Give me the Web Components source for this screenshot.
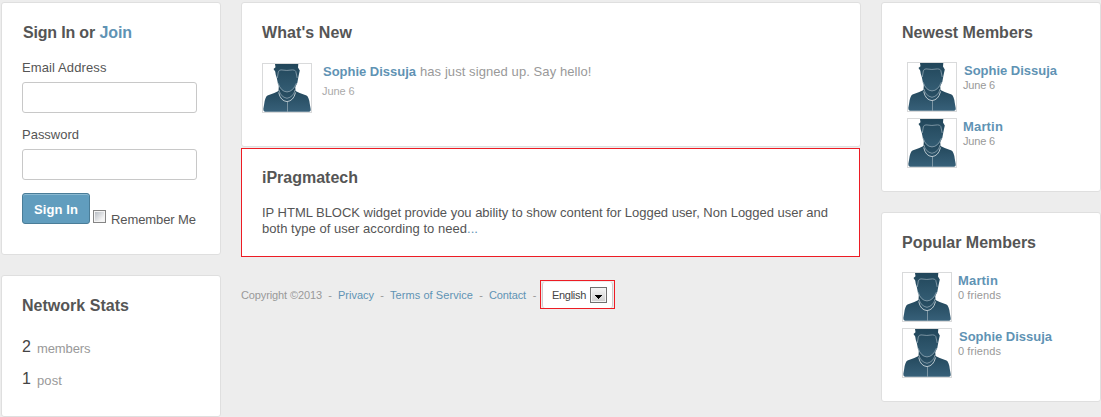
<!DOCTYPE html>
<html lang="en">
<head>
<meta charset="utf-8">
<title>Community home</title>
<style>
html,body{margin:0;height:417px;overflow:hidden;background:#ededed}
body{font-family:"Liberation Sans",Arial,sans-serif;font-size:13px;color:#555}
</style>
</head>
<body>
<community-page></community-page>
<script>
const define = (name, html, setup) => {
  const tpl = document.createElement('template');
  tpl.innerHTML = html;
  customElements.define(name, class extends HTMLElement {
    constructor() {
      super();
      this.attachShadow({mode: 'open'}).append(tpl.content.cloneNode(true));
    }
    connectedCallback() { if (setup) setup(this, this.shadowRoot); }
  });
};

/* A run of text tracked to a set width. */
define('fit-text', `<style>
:host{display:inline-block;white-space:pre;vertical-align:baseline}
:host([link]){color:#5f93b4}
:host([bold]){font-weight:bold}
</style><slot></slot>`, (el) => {
  const want = +el.getAttribute('w');
  requestAnimationFrame(() => {
    el.style.letterSpacing = '0px';
    const n = el.textContent.length;
    const gap = (want - el.getBoundingClientRect().width) / n;
    el.style.letterSpacing = gap.toFixed(3) + 'px';
  });
});

define('panel-card', `<style>
:host{display:block;box-sizing:border-box;background:#fff;border:1px solid #dfdfdf;border-radius:3px;padding:20px;min-width:0}
:host([marked]){border-color:#ed1c24;border-radius:0;padding-top:19px}
header{font-size:16px;line-height:20px;font-weight:bold;height:20px}
</style><header><slot name="title"></slot></header><slot></slot>`);

define('user-avatar', `<style>
:host{display:block;flex:none;box-sizing:border-box;width:50px;height:50px;border:1px solid #d9dadb;background:#fff}
svg{display:block}
</style>
<svg width="48" height="48" viewBox="0 0 48 48">
<defs>
<linearGradient id="h" x1="0" y1="0" x2="0" y2="1"><stop offset="0" stop-color="#21465a"/><stop offset="1" stop-color="#345d74"/></linearGradient>
<linearGradient id="b" x1="0" y1="0" x2="0" y2="1"><stop offset="0" stop-color="#1f4356"/><stop offset="1" stop-color="#376079"/></linearGradient>
</defs>
<path fill="url(#b)" d="M15.800 22 L15.500 27 Q11 29.500 4.500 31.500 Q2 33 1.200 40 L.3 45 Q.2 47.700 2 47.700 H46 Q48 47.700 47.700 45 L46.800 40 Q46 33 43.500 31.500 Q37 29.500 32.500 27 L32.200 22Z"/>
<path fill="url(#h)" d="M12 0 H35.300 L35 3.500 L36.800 6.500 L36 10 L35.200 14 L34.300 19 L32.800 22 Q30 28 24 28.300 Q18.500 28 16 22.500 L14.800 19 L13.800 14 L12.800 11 L12.200 7.500 L10.500 5 L12.500 3.200Z"/>
<g fill="none" stroke="#8fa5b1" stroke-width=".8">
<path d="M14.300 14 L15.300 8 Q16 5.800 18 5.900 Q24 7 29.500 5.900 Q32 5.700 32.800 7.500 L34.200 14"/>
<path d="M15 19 Q18 27.700 24 27.900 Q30 27.700 33.500 19"/>
<path d="M16 26 Q17.500 33 24 34.300 Q30.500 33 32 26"/>
<path stroke="#b9c7ce" stroke-width="1" d="M15.700 28.500 Q17.500 37 24 37.600 Q30.500 37 32.500 28.500"/>
<path d="M24.500 38 V48"/>
</g></svg>`);

define('member-row', `<style>
:host{display:flex;height:50px;margin-bottom:6px}
.info{padding-left:6px;min-width:0}
.name{display:block;height:15px;padding-top:1px;line-height:16px;padding-left:var(--indent,0)}
.meta{display:block;font-size:11px;line-height:14px;color:#999}
</style><user-avatar></user-avatar><div class="info"><span class="name"><slot name="name"></slot></span><span class="meta"><slot></slot></span></div>`);

define('text-field', `<style>
:host{display:block}
label{display:block;box-sizing:border-box;padding-top:1px;font-size:13px;line-height:16px;height:23px}
input{display:block;box-sizing:border-box;width:175px;height:31px;margin:0;border:1px solid #c8c8c8;border-radius:3px;background:#fff;outline:0}
</style><label><slot></slot></label><input aria-label="field">`);

define('sign-in-form', `<style>
:host{display:block;padding-top:16px}
text-field+text-field{margin-top:13px}
.row{display:flex;margin-top:13px;height:31px}
button{box-sizing:border-box;width:68px;height:31px;margin:0;padding:2px 0 0;border:1px solid #4a7d98;border-radius:3px;background:#619dbe;box-shadow:inset 0 1px #8bbad2;color:#fff;font:bold 13px/16px "Liberation Sans",Arial,sans-serif}
.check{box-sizing:border-box;width:13px;height:13px;margin:17px 0 0 3px;border:1px solid #858585;background:linear-gradient(135deg,#b9bec5,#f4f4f4 80%) content-box,#f4f4f4;padding:1px}
.remember{margin:19px 0 0 5px;line-height:16px}
</style>
<text-field><fit-text w="84.500">Email Address</fit-text></text-field>
<text-field><fit-text w="57">Password</fit-text></text-field>
<div class="row"><button><fit-text w="44">Sign In</fit-text></button><span class="check" role="checkbox"></span><span class="remember"><fit-text w="85">Remember Me</fit-text></span></div>`);

define('stat-line', `<style>
:host{display:flex;align-items:baseline;height:32px;line-height:20px}
b{font-weight:normal;font-size:16px;width:15px;color:#444}
span{color:#999;font-size:13px;padding-top:1px;transform:translateY(1px)}
</style><b><slot name="count"></slot></b><span><slot></slot></span>`);

define('activity-item', `<style>
:host{display:flex;padding-top:20px}
.body{padding-left:10px}
.line{padding:1px 0 0 1px;line-height:16px;height:20px;color:#999;white-space:nowrap}
.date{font-size:11px;line-height:14px;color:#aaa}
</style><user-avatar></user-avatar><div class="body"><div class="line"><slot></slot></div><div class="date"><slot name="date"></slot></div></div>`);

define('language-picker', `<style>
:host{display:block;box-sizing:border-box;width:75px;height:29px;border:1px solid #ed1c24;padding:1px}
.box{box-sizing:border-box;height:26px;border:1px solid #ccc;border-width:0 1px;border-radius:3px;background:#fff;display:flex;align-items:center;padding:0 5px 0 9px;justify-content:space-between;color:#444}
.arrow{box-sizing:border-box;width:17px;height:16px;border:1px solid #707070;background:linear-gradient(#f5f5f5,#cfcfcf);box-shadow:inset 0 0 0 1px #f3f3f3}
svg{display:block}
</style><div class="box"><fit-text w="34">English</fit-text><span class="arrow"><svg width="15" height="14"><path d="M4 7h7v1h-1v1H9v1H8v1H7v-1H6V9H5V8H4z" fill="#000"/></svg></span></div>`);

define('page-footer', `<style>
:host{display:flex;align-items:center;height:29px;margin-top:23px;font-size:11px;color:#999;white-space:pre}
.dash{width:16px;text-align:center}
.last{width:14px}
</style>
<fit-text w="81">Copyright ©2013</fit-text><span class="dash">-</span><fit-text link w="36">Privacy</fit-text><span class="dash">-</span><fit-text link w="83">Terms of Service</fit-text><span class="dash">-</span><fit-text link w="37">Contact</fit-text><span class="dash last"> -</span><language-picker></language-picker>`);

define('community-page', `<style>
:host{display:grid;grid-template-columns:220px 620px 220px;column-gap:20px;padding:2px 0 0 1px;width:1100px;box-sizing:border-box;align-items:start}
.col{display:grid;row-gap:20px;align-content:start}
.main{display:block}
.news{height:145px;margin-bottom:1px}
.html{height:109px;width:619px}
p{margin:17px 0 0;line-height:16px;white-space:nowrap}
.stats{padding-top:21px}
</style>
<div class="col">
<panel-card style="height:253px"><span slot="title" style="padding-left:1px"><fit-text w="72">Sign In or</fit-text><fit-text link w="37"> Join</fit-text></span><sign-in-form></sign-in-form></panel-card>
<panel-card style="height:142px"><fit-text slot="title" w="107">Network Stats</fit-text><div class="stats"><stat-line><span slot="count">2</span><fit-text w="53.500">members</fit-text></stat-line><stat-line><span slot="count">1</span><fit-text w="25">post</fit-text></stat-line></div></panel-card>
</div>
<div class="main">
<panel-card class="news"><fit-text slot="title" w="90">What's New</fit-text><activity-item><fit-text link bold w="93">Sophie Dissuja</fit-text><span style="display:inline-block;width:4px"></span><fit-text w="171.500">has just signed up. Say hello!</fit-text><fit-text slot="date" w="32.500">June 6</fit-text></activity-item></panel-card>
<panel-card class="html" marked><fit-text slot="title" w="96">iPragmatech</fit-text><p><fit-text w="566">IP HTML BLOCK widget provide you ability to show content for Logged user, Non Logged user and</fit-text><br><fit-text w="216">both type of user according to need<span style="color:#5f93b4">...</span></fit-text></p></panel-card>
<page-footer></page-footer>
</div>
<div class="col">
<panel-card style="height:190px"><fit-text slot="title" w="131">Newest Members</fit-text><div style="padding:19px 0 0 5px">
<member-row style="--indent:1px"><fit-text slot="name" link bold w="93">Sophie Dissuja</fit-text><fit-text w="32">June 6</fit-text></member-row>
<member-row><fit-text slot="name" link bold w="40">Martin</fit-text><fit-text w="32">June 6</fit-text></member-row></div></panel-card>
<panel-card style="height:190px"><fit-text slot="title" w="134">Popular Members</fit-text><div style="padding-top:19px">
<member-row><fit-text slot="name" link bold w="40">Martin</fit-text><fit-text w="43">0 friends</fit-text></member-row>
<member-row style="--indent:1px"><fit-text slot="name" link bold w="93">Sophie Dissuja</fit-text><fit-text w="43">0 friends</fit-text></member-row></div></panel-card>
</div>`);
</script>
</body>
</html>
